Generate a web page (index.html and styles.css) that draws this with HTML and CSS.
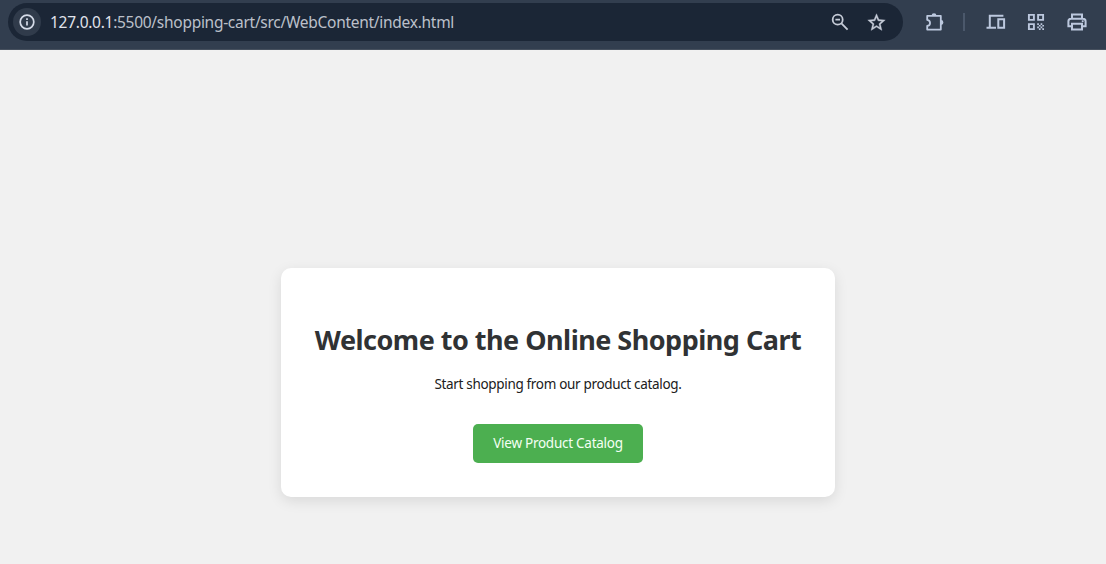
FILE: index.html
```html
<!DOCTYPE html>
<html lang="en">
<head>
<meta charset="utf-8">
<title>Online Shopping Cart</title>
<link rel="stylesheet" href="styles.css">
</head>
<body>
<header class="toolbar">
  <div class="address">
    <span class="site-info">
      <svg width="18" height="18" viewBox="0 0 18 18" fill="none" stroke="currentColor" stroke-width="1.7"><circle cx="9" cy="9" r="6.8"/><path d="M9 8.2v4.3M9 5.2v1.7"/></svg>
    </span>
    <span class="url"><span class="host">127.0.0.1</span><span class="path">:5500/shopping-cart/src/WebContent/index.html</span></span>
    <svg class="zoom-icon" width="18" height="18" viewBox="0 0 18 18" fill="none" stroke="currentColor" stroke-width="1.8"><circle cx="6.7" cy="6.7" r="5"/><path d="M10.4 10.4l6.2 6.2M4.4 6.7h4.6"/></svg>
    <svg class="star-icon" width="21" height="21" viewBox="0 0 24 24" fill="currentColor" stroke="currentColor" stroke-width=".4"><path d="M22 9.24l-7.19-.62L12 2 9.19 8.63 2 9.24l5.46 4.73L5.82 21 12 17.27 18.18 21l-1.63-7.03L22 9.24zM12 15.4l-3.76 2.27 1-4.28-3.32-2.88 4.38-.38L12 6.1l1.71 4.04 4.38.38-3.32 2.88 1 4.28L12 15.4z"/></svg>
  </div>
  <svg class="puzzle-icon" width="20" height="20" viewBox="0 0 20 20"><path fill="none" stroke="currentColor" stroke-width="1.8" stroke-linejoin="round" d="M2.2 3.8H15.8V17.6H2.2V13.9C6 13.3 6 8.5 2.2 7.9Z"/><path fill="currentColor" d="M6.6 3.6a2.4 2.4 0 0 1 4.8 0zM16 8.1a2.4 2.4 0 0 1 0 4.8z"/></svg>
  <span class="divider"></span>
  <svg class="devices-icon" width="20" height="16" viewBox="0 0 20 16" fill="none" stroke="currentColor" stroke-width="2"><path d="M17.4 1.8H3.8V13.6M.5 13.8H10"/><path d="M12.3 5.2h5.8v8.6h-5.8z"/></svg>
  <svg class="qr-icon" width="18" height="18" viewBox="0 0 18 18"><path fill="none" stroke="currentColor" stroke-width="1.9" d="M1.9 1.9h5v5h-5zM11.1 1.9h5v5h-5zM1.9 11.1h5v5h-5z"/><path fill="currentColor" d="M10.2 10.2h1.7v1.7h-1.7zM13.6 10.2h1.7v1.7h-1.7zM11.9 11.9h1.7v1.7h-1.7zM15.3 11.9h1.7v1.7h-1.7zM10.2 13.6h1.7v1.7h-1.7zM13.6 13.6h1.7v1.7h-1.7zM11.9 15.3h1.7V17h-1.7zM15.3 15.3h1.7V17h-1.7z"/></svg>
  <svg class="print-icon" width="20" height="18" viewBox="0 0 20 18" fill="none" stroke="currentColor" stroke-width="2"><path d="M5 5.6V1.6h10v4M4.5 13.2H1.4V8.3Q1.4 5.7 4 5.7h12q2.6 0 2.6 2.6v4.9h-3.1"/><path d="M5 10.7h10v5.7H5z"/><path stroke="none" fill="currentColor" d="M14.8 7.3h1.8v1.8h-1.8z"/></svg>
</header>
<main class="page">
  <section class="card">
    <h1 class="title">Welcome to the Online Shopping Cart</h1>
    <p class="intro">Start shopping from our product catalog.</p>
    <a class="button" href="#">View Product Catalog</a>
  </section>
</main>
</body>
</html>
```

FILE: styles.css
```css
* {
  box-sizing: border-box;
}

body {
  margin: 0;
  height: 564px;
  display: flex;
  flex-direction: column;
  overflow: hidden;
  background: #f1f1f1;
  font-family: "Segoe UI", "Noto Sans", sans-serif;
}

svg {
  display: block;
  flex: none;
}

.toolbar {
  display: flex;
  align-items: center;
  height: 50px;
  padding: 3px 0 8px 8px;
  background: #323e4f;
  border-bottom: 1px solid #46505e;
  color: #bcc8de;
}

.address {
  display: flex;
  align-items: center;
  width: 895px;
  height: 38px;
  padding: 0 16px 0 5px;
  border-radius: 19px;
  background: #1b2636;
  color: #c6ccd8;
}

.site-info {
  display: flex;
  align-items: center;
  justify-content: center;
  width: 28px;
  height: 28px;
  border-radius: 50%;
  background: #303b4b;
  color: #d5dbe8;
}

.url {
  flex: 1;
  margin-left: 9px;
  font-size: 15.5px;
  line-height: 22px;
  letter-spacing: -0.28px;
  white-space: nowrap;
}

.host {
  color: #e0e3eb;
}

.path {
  color: #bbc0ca;
}

.star-icon {
  margin-left: 17px;
}

.puzzle-icon {
  margin-left: 22px;
}

.divider {
  width: 2px;
  height: 18px;
  margin-left: 18px;
  background: #4b586b;
}

.devices-icon {
  margin-left: 21px;
}

.qr-icon {
  margin-left: 21px;
}

.print-icon {
  margin-left: 22px;
}

.page {
  flex: 1;
  padding: 218px 0 0 281px;
}

.card {
  display: flex;
  flex-direction: column;
  align-items: center;
  width: 554px;
  height: 229px;
  padding-top: 52px;
  border-radius: 10px;
  background: #fff;
  box-shadow: 0 4px 14px rgba(0, 0, 0, 0.1);
}

.title {
  margin: 0;
  font-size: 27px;
  line-height: 40px;
  font-weight: 700;
  letter-spacing: -0.51px;
  color: #303234;
  white-space: nowrap;
}

.intro {
  margin: 14px 0 0;
  font-size: 13.5px;
  line-height: 20px;
  letter-spacing: -0.33px;
  color: #202020;
  white-space: nowrap;
}

.button {
  width: 170px;
  height: 39px;
  margin-top: 30px;
  border-radius: 5px;
  background: #4caf50;
  color: #f4fff4;
  font-size: 13.5px;
  line-height: 39px;
  letter-spacing: -0.26px;
  text-align: center;
  text-decoration: none;
  white-space: nowrap;
}
```
